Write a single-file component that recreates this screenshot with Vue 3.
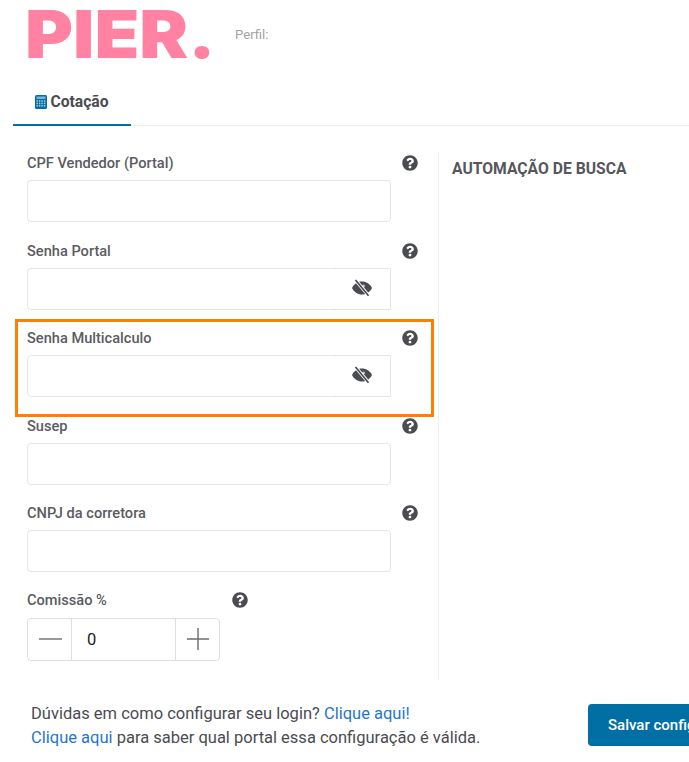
<template>
  <div class="page">
    <header class="top">
      <div class="logo">PIER.</div>
      <div class="perfil">Perfil:</div>
    </header>

    <nav class="tabs">
      <a class="tab">
        <svg class="calc" viewBox="0 0 12 14" width="12" height="14">
          <rect width="12" height="14" rx="1.5" fill="#006fa3" />
          <rect x="1.500" y="1.500" width="9" height="2.500" fill="#7fb2cc" />
          <rect v-for="k in calcKeys" :key="k.x + '-' + k.y" :x="k.x" :y="k.y" width="1.400" height="1.600" fill="#a9cddf" />
        </svg>
        Cotação
      </a>
    </nav>

    <main class="content">
      <section class="form">
        <div v-for="f in fields" :key="f.label" class="field">
          <div class="field-head">
            <label>{{ f.label }}</label>
            <svg class="help" viewBox="0 0 512 512" width="16" height="16">
              <path :d="helpPath" fill="#4a4c52" />
            </svg>
          </div>
          <div class="input-wrap" :class="{ 'has-eye': f.eye }">
            <input type="text" />
            <span v-if="f.eye" class="eye">
              <svg viewBox="0 0 20 18" width="20" height="18">
                <path fill="#4a4c52" d="M0 9C2 5 5.500 2.500 10 2.500S18 5 20 9c-2 4-5.500 6.500-10 6.500S2 13 0 9z" />
                <path d="M3 0.500 17 17" stroke="#fff" stroke-width="3.4" fill="none" />
                <path d="M3.500 1 16.500 16.800" stroke="#4a4c52" stroke-width="1.700" fill="none" />
                <circle cx="11.500" cy="7" r="1.500" fill="#fff" opacity="0.7" />
              </svg>
            </span>
          </div>
        </div>

        <div class="field commission">
          <div class="field-head">
            <label>Comissão %</label>
            <svg class="help" viewBox="0 0 512 512" width="16" height="16">
              <path :d="helpPath" fill="#4a4c52" />
            </svg>
          </div>
          <div class="stepper">
            <button class="step" type="button">
              <svg viewBox="0 0 24 24" width="24" height="24"><path d="M1 12h23" stroke="#6b6d70" stroke-width="1.4" fill="none" /></svg>
            </button>
            <div class="value">{{ comissao }}</div>
            <button class="step" type="button">
              <svg viewBox="0 0 24 24" width="24" height="24"><path d="M1 12h22M12 1v22" stroke="#6b6d70" stroke-width="1.4" fill="none" /></svg>
            </button>
          </div>
        </div>
      </section>

      <aside class="side">
        <h2>AUTOMAÇÃO DE BUSCA</h2>
      </aside>
    </main>

    <footer class="bottom">
      <p class="hint">
        Dúvidas em como configurar seu login? <a>Clique aqui!</a><br />
        <a>Clique aqui</a> para saber qual portal essa configuração é válida.
      </p>
      <button class="save" type="button">Salvar configurações</button>
    </footer>

    <!-- destaque em volta do campo Senha Multicalculo -->
    <div class="highlight"></div>
  </div>
</template>

<script setup>
import { ref } from 'vue'

const comissao = ref(0)

const fields = [
  { label: 'CPF Vendedor (Portal)', eye: false },
  { label: 'Senha Portal', eye: true },
  { label: 'Senha Multicalculo', eye: true },
  { label: 'Susep', eye: false },
  { label: 'CNPJ da corretora', eye: false }
]

// teclas do icone da calculadora
const calcKeys = []
for (const y of [5.2, 7.6, 10]) {
  for (const x of [1.5, 3.9, 6.3, 8.9]) {
    calcKeys.push({ x, y })
  }
}

const helpPath =
  'M504 256c0 137-111 248-248 248S8 393 8 256 119 8 256 8s248 111 248 248zM262.7 90c-54.5 0-89.3 23-116.5 63.8-3.5 5.3-2.4 12.4 2.7 16.3l34.7 26.3c5.2 3.9 12.6 3 16.7-2.1 17.9-22.7 30.1-35.8 57.3-35.8 20.4 0 45.7 13.1 45.7 32.9 0 14.9-12.3 22.6-32.4 33.9C247.4 238 216 254.6 216 296v4c0 6.6 5.4 12 12 12h56c6.6 0 12-5.4 12-12v-1.3c0-28.7 83.9-29.9 83.9-107.6C379.9 132.6 319.5 90 262.7 90zM256 340c-25.6 0-46.4 20.8-46.4 46.4s20.8 46.4 46.4 46.4 46.4-20.8 46.4-46.4S281.6 340 256 340z'
</script>

<style>
html,
body {
  margin: 0;
  background: #fff;
  overflow: hidden;
}
</style>

<style scoped>
.page {
  position: relative;
  width: 689px;
  height: 762px;
  overflow: hidden;
  font-family: Roboto, "Liberation Sans", sans-serif;
  color: #4a4c52;
}

.top {
  display: flex;
  align-items: flex-start;
  height: 78px;
  padding-left: 25px;
}

.logo {
  width: 210px;
  margin-top: 1px;
  font-family: Inter, Roboto, sans-serif;
  font-size: 66px;
  font-weight: 900;
  line-height: 66px;
  color: #ff82a3;
  transform: scaleX(1.11);
  transform-origin: left center;
}

.perfil {
  margin-top: 27px;
  font-size: 13.2px;
  line-height: 16px;
  color: #a3a3a3;
}

.tabs {
  display: flex;
  height: 47px;
  margin-left: 13px;
  border-bottom: 1px solid #eeeeee;
}

.tab {
  display: flex;
  align-items: center;
  justify-content: center;
  gap: 3px;
  width: 118px;
  height: 48px;
  padding-top: 1px;
  box-sizing: border-box;
  border-bottom: 2px solid #006fa3;
  font-size: 15.7px;
  font-weight: 700;
  color: #4a4c52;
}

.content {
  display: flex;
  align-items: flex-start;
  padding: 26px 0 0 27px;
}

.form {
  width: 412px;
  height: 528px;
  box-sizing: border-box;
  padding: 2px 20px 0 0;
  border-right: 1px solid #eeeeee;
}

.field {
  height: 87.5px;
}

.field-head {
  display: flex;
  align-items: center;
  justify-content: space-between;
  height: 18px;
  margin-bottom: 8px;
}

.field-head label {
  font-size: 14.6px;
  font-weight: 500;
  line-height: 18px;
  color: #5a5c61;
}

.help {
  display: block;
}

.input-wrap {
  position: relative;
  width: 364px;
  height: 42px;
  box-sizing: border-box;
  border: 1px solid #e6e6e6;
  border-radius: 4px;
  background: #fff;
}

.input-wrap.has-eye {
  border-radius: 4px 0 0 4px;
}

.input-wrap input {
  width: 100%;
  height: 100%;
  padding: 0 12px;
  box-sizing: border-box;
  border: 0;
  outline: 0;
  background: transparent;
}

.eye {
  position: absolute;
  top: -1px;
  right: -1px;
  bottom: -1px;
  display: flex;
  align-items: center;
  justify-content: center;
  width: 57px;
  padding: 0 2px 2px 0;
  box-sizing: border-box;
}

.eye::before {
  content: "";
  position: absolute;
  left: 0;
  top: 0;
  width: 1px;
  height: 1px;
  background: #c9c9c9;
  box-shadow: 0 41px 0 #c9c9c9;
}

.commission .field-head {
  width: 221px;
  margin-top: -1px;
  margin-bottom: 9px;
}

.stepper {
  display: flex;
  width: 193px;
  height: 43px;
  box-sizing: border-box;
  border: 1px solid #dedede;
  border-radius: 4px;
}

.step {
  display: flex;
  align-items: center;
  justify-content: center;
  width: 43px;
  padding: 0;
  border: 0;
  background: #fff;
  border-radius: 4px;
}

.value {
  flex: 1;
  padding-left: 15px;
  border-left: 1px solid #dedede;
  border-right: 1px solid #dedede;
  font-size: 16.5px;
  line-height: 41px;
  color: #222;
}

.side {
  padding-left: 13px;
}

.side h2 {
  margin: 7px 0 0;
  font-size: 15.7px;
  font-weight: 700;
  line-height: 20px;
  color: #55575c;
}

.bottom {
  display: flex;
  align-items: flex-start;
  justify-content: space-between;
  padding: 22px 0 0 31px;
}

.hint {
  margin: 0;
  font-size: 16.5px;
  line-height: 24px;
  color: #4a4c52;
}

.hint a {
  color: #1f76d2;
}

.save {
  position: absolute;
  left: 588px;
  top: 704px;
  width: 200px;
  height: 42px;
  padding: 0 0 0 20px;
  border: 0;
  border-radius: 4px;
  background: #006fa3;
  color: #fff;
  font-family: inherit;
  font-size: 15px;
  font-weight: 500;
  text-align: left;
}

.highlight {
  position: absolute;
  left: 15px;
  top: 319px;
  width: 419px;
  height: 98px;
  box-sizing: border-box;
  border: 3px solid #ff8000;
  pointer-events: none;
}
</style>
